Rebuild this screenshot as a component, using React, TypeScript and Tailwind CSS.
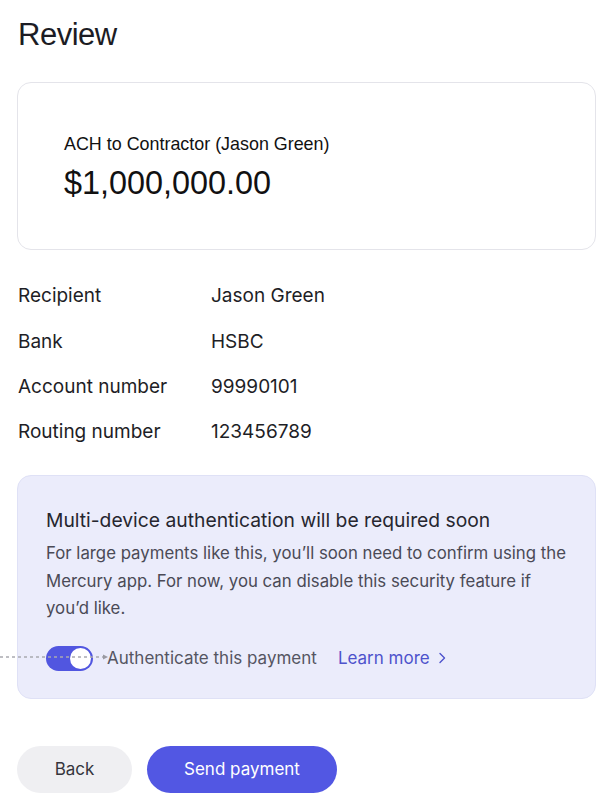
import React from "react";

const inter = { fontFamily: 'Inter, "Noto Sans", sans-serif' };
const arial = { fontFamily: '"Liberation Sans", Arial, sans-serif' };

function Row({ label, value }: { label: string; value: string }) {
  return (
    <div className="flex items-center h-[45.3px]">
      <div className="w-[193px] text-[19px] text-[#1e1e26]">{label}</div>
      <div className="text-[19px] text-[#1e1e26]">{value}</div>
    </div>
  );
}

export default function App() {
  return (
    <div className="relative w-[605px] h-[801px] bg-white overflow-hidden" style={inter}>
      <div className="pl-[17px] w-[596px] flex flex-col">
        <h1 className="text-[31px] leading-[40px] tracking-[-0.5px] text-[#1c1c24] mt-[15px] pl-[1px]" style={arial}>
          Review
        </h1>
        <div className="mt-[27px] h-[168px] rounded-[14px] border border-[#e4e4ea] flex flex-col justify-center pl-[46px] pt-[2px]" style={arial}>
          <div className="text-[17.9px] leading-[22px] text-[#111]">ACH to Contractor (Jason Green)</div>
          <div className="text-[32.4px] leading-[38px] text-[#111] mt-[9px]">$1,000,000.00</div>
        </div>
        <div className="mt-[24px] pl-[1px] flex flex-col">
          <Row label="Recipient" value="Jason Green" />
          <Row label="Bank" value="HSBC" />
          <Row label="Account number" value="99990101" />
          <Row label="Routing number" value="123456789" />
        </div>
        <div className="mt-[20px] rounded-[14px] border border-[#dfe1f6] bg-[#ebecfb] pl-[28px] pr-[20px] pt-[31px] pb-[27px]">
          <div className="text-[19.3px] leading-[26px] text-[#26262f]">
            Multi-device authentication will be required soon
          </div>
          <div className="mt-[7px] text-[16.8px] leading-[27.6px] text-[#4a4a56]">
            For large payments like this, you’ll soon need to confirm using the Mercury app. For now, you can disable this security feature if you’d like.
          </div>
          <div className="mt-[23px] flex items-center h-[25px]">
            <div className="w-[47px] h-[25px] rounded-full bg-[#5156e0] flex items-center justify-end pr-[2px]">
              <div className="w-[21px] h-[21px] rounded-full bg-white" />
            </div>
            <div className="ml-[14px] text-[17px] text-[#555562]">Authenticate this payment</div>
            <div className="ml-[21px] text-[17px] text-[#4e53cc] flex items-center">
              Learn more
              <svg className="ml-[8px]" width="8" height="12" viewBox="0 0 8 12" fill="none">
                <path d="M2 1.5 L6.5 6 L2 10.5" stroke="#4e53cc" strokeWidth="1.4" strokeLinecap="round" strokeLinejoin="round" />
              </svg>
            </div>
          </div>
        </div>
        <div className="mt-[47px] flex gap-[15px]">
          <button className="w-[115px] h-[47px] rounded-full bg-[#efeff2] text-[17px] text-[#35353d]">Back</button>
          <button className="w-[190px] h-[47px] rounded-full bg-[#5257e3] text-[17px] text-white">Send payment</button>
        </div>
      </div>
      <svg className="absolute left-0 top-[652px]" width="112" height="10" viewBox="0 0 112 10">
        <line x1="0" y1="5" x2="104" y2="5" stroke="#a9a9b0" strokeWidth="1.5" strokeDasharray="3 3" />
        <path d="M103 2.5 L108 5 L103 7.5 Z" fill="#9a9aa2" />
      </svg>
    </div>
  );
}
